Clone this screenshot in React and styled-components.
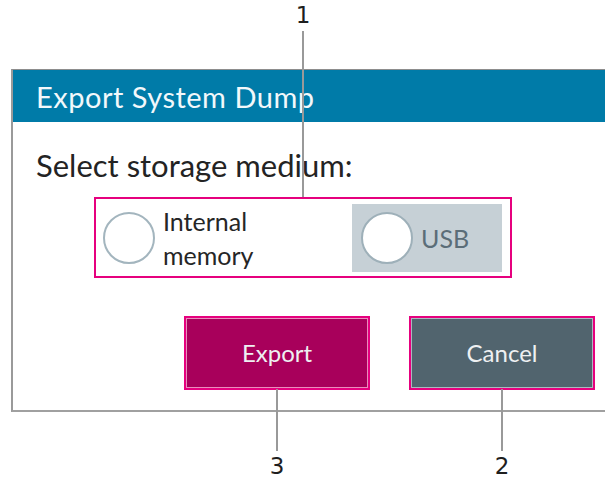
import React, { useState } from 'react';
import styled, { createGlobalStyle } from 'styled-components';

const GlobalStyle = createGlobalStyle`
html, body {
  margin: 0;
  padding: 0;
  background: #ffffff;
  overflow: hidden;
}
body {
  font-family: Lato, "Open Sans", sans-serif;
}
`

const App = () => {

    const [medium, setMedium] = useState(null);

    return (
        <Page>
            <GlobalStyle/>
            <Dialog>
                <Header>
                    <Title>Export System Dump</Title>
                </Header>
                <Content>
                    <Prompt>Select storage medium:</Prompt>
                    <OptionsFrame>
                        <Option onClick={() => setMedium('internal')}>
                            <Radio $checked={medium === 'internal'}/>
                            <OptionLabel>Internal<br/>memory</OptionLabel>
                        </Option>
                        <Option $disabled onClick={() => setMedium('usb')}>
                            <Radio $disabled $checked={medium === 'usb'}/>
                            <OptionLabel $disabled>USB</OptionLabel>
                        </Option>
                    </OptionsFrame>
                    <ButtonRow>
                        <ActionButton $color="#a8005b" $inner="rgba(255, 190, 220, 0.75)">Export</ActionButton>
                        <ActionButton $color="#51646e" $inner="rgba(210, 220, 226, 0.7)">Cancel</ActionButton>
                    </ButtonRow>
                </Content>
            </Dialog>

            {/* callout markers drawn over the dialog */}
            <Callout $x={303} $top={2}>
                <CalloutNumber>1</CalloutNumber>
                <CalloutLine $length={166}/>
            </Callout>
            <Callout $x={277} $top={389}>
                <CalloutLine $length={62}/>
                <CalloutNumber>3</CalloutNumber>
            </Callout>
            <Callout $x={502} $top={389}>
                <CalloutLine $length={62}/>
                <CalloutNumber>2</CalloutNumber>
            </Callout>
        </Page>
    )
}

const Page = styled.div`
position: relative;
width: 605px;
height: 480px;
padding: 69px 0 0 11px;
box-sizing: border-box;
`

const Dialog = styled.div`
width: 620px;
height: 343px;
box-sizing: border-box;
border-top: 1px solid #8d8d8d;
border-left: 2px solid #9a9a9a;
border-bottom: 2px solid #a0a0a0;
background: #ffffff;
display: flex;
flex-direction: column;
`

const Header = styled.div`
height: 52px;
background: #007ba8;
display: flex;
align-items: center;
padding: 1px 0 0 23px;
box-sizing: border-box;
`

const Title = styled.h1`
margin: 0;
font-size: 29px;
font-weight: 400;
color: #f2f8fb;
letter-spacing: 0.5px;
`

const Content = styled.div`
display: flex;
flex-direction: column;
align-items: flex-start;
`

const Prompt = styled.div`
margin: 25px 0 0 23px;
font-size: 31px;
line-height: 37px;
color: #232323;
`

const OptionsFrame = styled.div`
margin: 13px 0 0 81px;
width: 418px;
height: 81px;
box-sizing: border-box;
border: 2px solid #e6007e;
display: flex;
align-items: center;
justify-content: space-between;
padding: 0 8px 0 7px;
`

const Option = styled.div`
display: flex;
align-items: center;
gap: 8px;
height: 68px;
box-sizing: border-box;
padding: ${props => props.$disabled ? '0 0 0 9px' : '0'};
width: ${props => props.$disabled ? '150px' : 'auto'};
background: ${props => props.$disabled ? '#c6d0d6' : 'transparent'};
cursor: pointer;
`

const Radio = styled.span`
width: 52px;
height: 52px;
box-sizing: border-box;
border-radius: 50%;
border: 2px solid ${props => props.$disabled ? '#9eb0b9' : '#a3b5be'};
background: ${props => props.$checked ? 'radial-gradient(circle, #007ba8 0 12px, #ffffff 13px)' : '#ffffff'};
flex-shrink: 0;
`

const OptionLabel = styled.span`
font-size: 25px;
line-height: 34px;
color: ${props => props.$disabled ? '#5b6d78' : '#262626'};
`

const ButtonRow = styled.div`
display: flex;
gap: 39px;
margin: 38px 0 0 171px;
`

const ActionButton = styled.button`
width: 186px;
height: 74px;
box-sizing: border-box;
border: 2px solid #e6007e;
box-shadow: inset 0 0 0 1px ${props => props.$inner};
background: ${props => props.$color};
color: #eef0f2;
font-family: Lato, "Open Sans", sans-serif;
font-size: 24px;
padding: 0 0 2px;
cursor: pointer;
`

const Callout = styled.div`
position: absolute;
left: ${props => props.$x - 20}px;
top: ${props => props.$top}px;
width: 40px;
display: flex;
flex-direction: column;
align-items: center;
gap: 2px;
pointer-events: none;
`

const CalloutNumber = styled.span`
font-family: "DejaVu Sans", sans-serif;
font-size: 23px;
line-height: 27px;
color: #1e1e1e;
`

const CalloutLine = styled.span`
width: 2px;
height: ${props => props.$length}px;
background: #999999;
`

export default App
